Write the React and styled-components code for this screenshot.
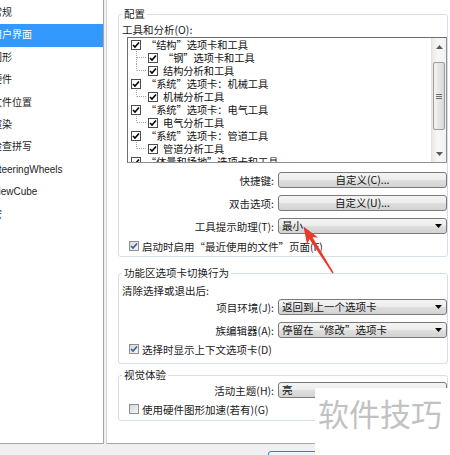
import React from "react";
import styled, { createGlobalStyle } from "styled-components";

const GlobalStyle = createGlobalStyle`
  html, body {
    margin: 0;
    padding: 0;
    background: #f0f0f0;
  }
  body {
    font-family: "Noto Sans CJK SC", "Noto Sans", sans-serif;
  }
`;

const Window = styled.div`
  position: relative;
  width: 450px;
  height: 455px;
  overflow: hidden;
  display: flex;
  flex-direction: column;
  background: #f0f0f0;
`;

const Body = styled.div`
  display: flex;
  height: 444px;
  flex: none;
  gap: 2px;
`;

/* left category list */
const Sidebar = styled.div`
  width: 104px;
  flex: none;
  box-sizing: border-box;
  padding-top: 2px;
  background: #fff;
  border-right: 1px solid #a5a5a5;
  border-bottom: 1px solid #a5a5a5;
  overflow: hidden;
`;

const NavItem = styled.div`
  height: 22.4px;
  line-height: 22.4px;
  margin-left: -8px;
  white-space: nowrap;
  font-family: "Liberation Sans", "Noto Sans CJK SC", sans-serif;
  font-size: 10px;
  color: ${(p) => (p.$active ? "#fff" : "#1e1e1e")};
  background: ${(p) => (p.$active ? "#3399ff" : "transparent")};
`;

/* right options page */
const Content = styled.div`
  flex: 1;
  box-sizing: border-box;
  padding: 7px 2px 0 11px;
  background: #fff;
  border-left: 1px solid #d6d6d6;
  border-bottom: 1px solid #a5a5a5;
  font-size: 10.5px;
  color: #1a1a1a;
`;

const Group = styled.fieldset`
  margin: ${(p) => p.$mt || 0}px 0 0 0;
  min-width: 0;
  padding: ${(p) => p.$pt || 0}px 0 ${(p) => p.$pb || 0}px 3px;
  border: 1px solid #d5dfe5;
  border-radius: 3px;
`;

const Legend = styled.legend`
  padding: 0 2px;
  line-height: 14px;
  color: #1a1a1a;
`;

const TextLine = styled.div`
  height: 14px;
  line-height: 14px;
  white-space: nowrap;
`;

const ListBox = styled.div`
  display: flex;
  height: 126px;
  margin-left: 5px;
  box-sizing: border-box;
  border: 1px solid #8e8f8f;
  border-top-color: #6e6e6e;
  border-left-color: #6e6e6e;
  background: #fff;
`;

const TreeRows = styled.div`
  flex: 1;
  overflow: hidden;
  padding-left: 3px;
  font-size: 10.2px;
`;

const TreeRow = styled.div`
  display: flex;
  align-items: center;
  height: 13px;
  white-space: nowrap;
  color: #111;
`;

const TreeText = styled.span`
  display: block;
  height: 13px;
  margin-left: 5px;
  line-height: 13px;
  overflow: hidden;
`;

const ListCheck = styled.span`
  width: 10px;
  height: 10px;
  flex: none;
  box-sizing: border-box;
  border: 1px solid #4d4d4d;
  background: #fff;
  display: flex;
  align-items: center;
  justify-content: center;
`;

const ScrollBar = styled.div`
  width: 14px;
  flex: none;
  display: flex;
  flex-direction: column;
  background: linear-gradient(90deg, #e9e9e9, #f7f7f7 40%, #f1f1f1);
  border-left: 1px solid #e4e4e4;
`;

const ScrollArrow = styled.div`
  height: 17px;
  display: flex;
  align-items: center;
  justify-content: center;
`;

const Thumb = styled.div`
  margin: 7px 1px 0;
  height: 68px;
  box-sizing: border-box;
  border: 1px solid #9c9c9c;
  border-radius: 2px;
  background: linear-gradient(90deg, #f4f4f4, #e6e6e6 50%, #d8d8d8);
  display: flex;
  flex-direction: column;
  align-items: center;
  justify-content: center;
  gap: 1px;
`;

const Grip = styled.span`
  width: 6px;
  height: 1px;
  background: #6f6f6f;
`;

const Spacer = styled.div`
  flex: 1;
`;

const FieldRow = styled.div`
  display: grid;
  grid-template-columns: 1fr 169px;
  column-gap: 4px;
  align-items: center;
  margin-top: ${(p) => p.$mt || 0}px;
`;

const FieldLabel = styled.span`
  text-align: right;
  white-space: nowrap;
`;

const Control = styled.div`
  height: 16px;
  box-sizing: border-box;
  border: 1px solid #7a7a7a;
  border-radius: 3px;
  background: linear-gradient(#f4f4f4 0%, #ececec 50%, #dfdfdf 51%, #d3d3d3 100%);
  display: flex;
  align-items: center;
  line-height: 14px;
  white-space: nowrap;
  color: #111;
`;

const PushButton = styled(Control)`
  justify-content: center;
`;

const ComboBox = styled(Control)`
  justify-content: space-between;
  padding: 0 4px 0 3px;
`;

const CheckRow = styled.div`
  display: flex;
  align-items: center;
  gap: 3px;
  height: 14px;
  padding-left: 7px;
  margin-top: ${(p) => p.$mt || 0}px;
  white-space: nowrap;
`;

const CheckBox = styled.span`
  width: 10px;
  height: 10px;
  flex: none;
  box-sizing: border-box;
  border: 1px solid #8f8f8f;
  background: linear-gradient(135deg, #d6d9de, #f4f5f7);
  display: flex;
  align-items: center;
  justify-content: center;
`;

/* bottom button strip */
const Footer = styled.div`
  flex: 1;
  padding: 7px 0 0 268px;
`;

const DialogButton = styled.div`
  width: 80px;
  height: 22px;
  box-sizing: border-box;
  border: 1px solid #3c7fb1;
  border-radius: 3px;
  background: linear-gradient(#eaf6fd, #bee6fd);
`;

/* overlays */
const Watermark = styled.div`
  position: absolute;
  left: 315px;
  top: 388px;
  width: 135px;
  height: 67px;
  box-sizing: border-box;
  padding: 9px 0 0 3px;
  background: #fff;
  font-size: 31px;
  line-height: 31px;
  color: #c2c2c2;
  white-space: nowrap;
`;

const Pointer = styled.svg`
  position: absolute;
  left: 296px;
  top: 220px;
  pointer-events: none;
`;

const navItems = [
  "常规",
  "用户界面",
  "图形",
  "硬件",
  "文件位置",
  "渲染",
  "检查拼写",
  "SteeringWheels",
  "ViewCube",
  "宏",
];

const toolRows = [
  { text: "“结构”选项卡和工具", level: 0 },
  { text: "“钢”选项卡和工具", level: 1 },
  { text: "结构分析和工具", level: 1, last: true },
  { text: "“系统”选项卡：机械工具", level: 0 },
  { text: "机械分析工具", level: 1, last: true },
  { text: "“系统”选项卡：电气工具", level: 0 },
  { text: "电气分析工具", level: 1, last: true },
  { text: "“系统”选项卡：管道工具", level: 0 },
  { text: "管道分析工具", level: 1, last: true },
  { text: "“体量和场地”选项卡和工具", level: 0 },
];

const Tick = ({ color = "#000" }) => (
  <svg width="8" height="8" viewBox="0 0 8 8">
    <path d="M1 4 L3 6 L7 1.5" fill="none" stroke={color} strokeWidth="1.6" />
  </svg>
);

const Connector = ({ last }) => (
  <svg width="17" height="13" viewBox="0 0 17 13" style={{ flex: "none" }}>
    <line x1="5.5" y1="0" x2="5.5" y2={last ? 6.5 : 13} stroke="#a0a0a0" strokeDasharray="1 1" />
    <line x1="6" y1="6.5" x2="16" y2="6.5" stroke="#a0a0a0" strokeDasharray="1 1" />
  </svg>
);

const Caret = ({ up }) => (
  <svg width="7" height="4" viewBox="0 0 7 4">
    <path d={up ? "M0 4 L3.5 0 L7 4 Z" : "M0 0 L7 0 L3.5 4 Z"} fill="#5a5a5a" />
  </svg>
);

const DropArrow = () => (
  <svg width="7" height="4" viewBox="0 0 7 4">
    <path d="M0 0 L7 0 L3.5 4 Z" fill="#000" />
  </svg>
);

function App() {
  return (
    <Window>
      <GlobalStyle />
      <Body>
        <Sidebar>
          {navItems.map((item) => (
            <NavItem key={item} $active={item === "用户界面"}>
              {item}
            </NavItem>
          ))}
        </Sidebar>

        <Content>
          <Group $pt={2} $pb={3}>
            <Legend>配置</Legend>
            <TextLine>工具和分析(O):</TextLine>
            <ListBox>
              <TreeRows>
                {toolRows.map((row) => (
                  <TreeRow key={row.text}>
                    {row.level === 1 && <Connector last={row.last} />}
                    <ListCheck>
                      <Tick />
                    </ListCheck>
                    <TreeText>{row.text}</TreeText>
                  </TreeRow>
                ))}
              </TreeRows>
              <ScrollBar>
                <ScrollArrow>
                  <Caret up />
                </ScrollArrow>
                <Thumb>
                  <Grip />
                  <Grip />
                  <Grip />
                </Thumb>
                <Spacer />
                <ScrollArrow>
                  <Caret />
                </ScrollArrow>
              </ScrollBar>
            </ListBox>

            <FieldRow $mt={9}>
              <FieldLabel>快捷键:</FieldLabel>
              <PushButton>自定义(C)...</PushButton>
            </FieldRow>
            <FieldRow $mt={7}>
              <FieldLabel>双击选项:</FieldLabel>
              <PushButton>自定义(U)...</PushButton>
            </FieldRow>
            <FieldRow $mt={7}>
              <FieldLabel>工具提示助理(T):</FieldLabel>
              <ComboBox>
                <span>最小</span>
                <DropArrow />
              </ComboBox>
            </FieldRow>
            <CheckRow $mt={5}>
              <CheckBox>
                <Tick color="#3b5b94" />
              </CheckBox>
              启动时启用“最近使用的文件”页面(F)
            </CheckRow>
          </Group>

          <Group $mt={9} $pt={4} $pb={7}>
            <Legend>功能区选项卡切换行为</Legend>
            <TextLine>清除选择或退出后:</TextLine>
            <FieldRow $mt={1}>
              <FieldLabel>项目环境(J):</FieldLabel>
              <ComboBox>
                <span>返回到上一个选项卡</span>
                <DropArrow />
              </ComboBox>
            </FieldRow>
            <FieldRow $mt={7}>
              <FieldLabel>族编辑器(A):</FieldLabel>
              <ComboBox>
                <span>停留在“修改”选项卡</span>
                <DropArrow />
              </ComboBox>
            </FieldRow>
            <CheckRow $mt={4}>
              <CheckBox>
                <Tick color="#3b5b94" />
              </CheckBox>
              选择时显示上下文选项卡(D)
            </CheckRow>
          </Group>

          <Group $mt={4} $pt={0} $pb={4}>
            <Legend>视觉体验</Legend>
            <FieldRow>
              <FieldLabel>活动主题(H):</FieldLabel>
              <ComboBox>
                <span>亮</span>
                <DropArrow />
              </ComboBox>
            </FieldRow>
            <CheckRow $mt={4}>
              <CheckBox />
              使用硬件图形加速(若有)(G)
            </CheckRow>
          </Group>
        </Content>
      </Body>

      <Footer>
        <DialogButton />
      </Footer>

      <Pointer width="44" height="58" viewBox="0 0 44 58">
        <polygon
          points="7.5,6.5 22.1,17.4 16.5,17.3 37.6,52.6 36.4,53.4 13.5,19.3 11.1,24.4"
          fill="#e8392e"
        />
      </Pointer>

      <Watermark>软件技巧</Watermark>
    </Window>
  );
}

export default App;
